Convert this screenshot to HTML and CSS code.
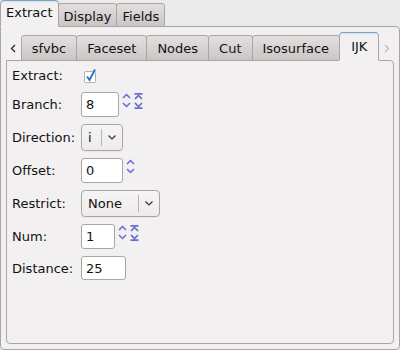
FILE: index.html
```html
<!DOCTYPE html>
<html lang="en">
<head>
  <meta charset="UTF-8" />
  <title>Extract | IJK</title>
  <link rel="stylesheet" href="styles.css">
</head>
<body>

  <div class="window">

    <div class="tabbar outer-tabs">
      <div class="tab active">Extract</div>
      <div class="tab">Display</div>
      <div class="tab">Fields</div>
    </div>

    <div class="panel outer-panel">

      <div class="tabbar inner-tabs">
        <span class="scroll-btn">
          <svg width="6" height="9" viewBox="0 0 6 9"><polyline points="5,1 1.5,4.5 5,8" fill="none" stroke="#222" stroke-width="1.2"/></svg>
        </span>
        <div class="tab">sfvbc</div>
        <div class="tab">Faceset</div>
        <div class="tab">Nodes</div>
        <div class="tab">Cut</div>
        <div class="tab">Isosurface</div>
        <div class="tab active">IJK</div>
        <span class="scroll-btn disabled">
          <svg width="6" height="9" viewBox="0 0 6 9"><polyline points="1,1 4.5,4.5 1,8" fill="none" stroke="#bdb9b9" stroke-width="1.2"/></svg>
        </span>
      </div>

      <div class="panel inner-panel">
        <div class="form">

          <label class="row-extract">Extract:</label>
          <div class="field row-extract">
            <span class="checkbox">
              <svg width="14" height="15" viewBox="0 0 14 15">
                <rect x="1.5" y="3.5" width="11" height="11" rx="1" fill="#fff" stroke="#b3afaf"/>
                <path d="M4 8.5 L6.5 12 L12 1.5" fill="none" stroke="#2f6bd1" stroke-width="1.8"/>
              </svg>
            </span>
          </div>

          <label>Branch:</label>
          <div class="field">
            <input class="entry w-branch" type="text" value="8">
            <svg class="spin" width="9" height="16" viewBox="0 0 9 16"><path d="M1 5 L4.5 1.5 L8 5 M1 10 L4.5 13.5 L8 10"/></svg>
            <svg class="spin double" width="9" height="16" viewBox="0 0 9 16"><path d="M0.5 0.8 H8.5 M1 6 L4.5 2.5 L8 6 M1 10 L4.5 13.5 L8 10 M0.5 15.2 H8.5"/></svg>
          </div>

          <label>Direction:</label>
          <div class="field">
            <div class="combo w-dir">
              <span class="combo-text">i</span>
              <span class="combo-arrow">
                <svg width="8" height="5" viewBox="0 0 8 5"><polyline points="0.5,0.5 4,4 7.5,0.5" fill="none" stroke="#333" stroke-width="1.2"/></svg>
              </span>
            </div>
          </div>

          <label>Offset:</label>
          <div class="field">
            <input class="entry w-offset" type="text" value="0">
            <svg class="spin" width="9" height="16" viewBox="0 0 9 16"><path d="M1 5 L4.5 1.5 L8 5 M1 10 L4.5 13.5 L8 10"/></svg>
          </div>

          <label>Restrict:</label>
          <div class="field">
            <div class="combo w-restrict">
              <span class="combo-text">None</span>
              <span class="combo-arrow">
                <svg width="8" height="5" viewBox="0 0 8 5"><polyline points="0.5,0.5 4,4 7.5,0.5" fill="none" stroke="#333" stroke-width="1.2"/></svg>
              </span>
            </div>
          </div>

          <label>Num:</label>
          <div class="field">
            <input class="entry w-num" type="text" value="1">
            <svg class="spin" width="9" height="16" viewBox="0 0 9 16"><path d="M1 5 L4.5 1.5 L8 5 M1 10 L4.5 13.5 L8 10"/></svg>
            <svg class="spin double" width="9" height="16" viewBox="0 0 9 16"><path d="M0.5 0.8 H8.5 M1 6 L4.5 2.5 L8 6 M1 10 L4.5 13.5 L8 10 M0.5 15.2 H8.5"/></svg>
          </div>

          <label>Distance:</label>
          <div class="field">
            <input class="entry w-dist" type="text" value="25">
          </div>

        </div>
      </div>

    </div>
  </div>

</body>
</html>
```

FILE: styles.css
```css
:root {
  --bg: #ecebeb;
  --panel: #f2f0f0;
  --border: #a9a5a5;
  --tab-top: #e4e0e0;
  --tab-bottom: #cbc5c5;
  --active-edge: #7ba3c4;
  --spin: #6a6ad6;
  --text: #111;
}

* {
  box-sizing: border-box;
  margin: 0;
  padding: 0;
}

body {
  font-family: 'DejaVu Sans', 'Liberation Sans', sans-serif;
  font-size: 13px;
  background-color: var(--bg);
  color: var(--text);
  width: 400px;
  height: 350px;
  overflow: hidden;
}

.window {
  display: flex;
  flex-direction: column;
  height: 350px;
}

/* tab bars */
.tabbar {
  display: flex;
  align-items: flex-end;
  position: relative;
  z-index: 1;
  margin-bottom: -1px;
}

.tab {
  display: flex;
  align-items: center;
  justify-content: center;
  border: 1px solid var(--border);
  background: linear-gradient(var(--tab-top), var(--tab-bottom));
  border-radius: 3px 3px 0 0;
  white-space: nowrap;
}
.tab + .tab {
  margin-left: -1px;
}
.tab.active {
  position: relative;
  z-index: 2;
  background: var(--panel);
  border-color: var(--active-edge) var(--border) var(--panel);
  border-radius: 4px 4px 0 0;
  box-shadow: inset 0 1px 0 #d4e4f0;
}

.outer-tabs {
  height: 27px;
}
.outer-tabs .tab {
  height: 24px;
  padding: 2px 5px 0;
}
.outer-tabs .tab.active {
  height: 27px;
  padding: 0 5px 2px;
}

.inner-tabs {
  height: 29px;
}
.inner-tabs .tab {
  height: 26px;
  padding: 1px 10px 0;
}
.inner-tabs .tab.active {
  height: 29px;
  padding: 0 11px 1px;
}

.scroll-btn {
  display: flex;
  align-items: center;
  justify-content: center;
  width: 16px;
  height: 26px;
}
.scroll-btn.disabled {
  margin-left: auto;
}

/* panels */
.panel {
  background-color: var(--panel);
  border: 1px solid var(--border);
}

.outer-panel {
  flex: 1;
  display: flex;
  flex-direction: column;
  padding: 5px;
  border-radius: 0 4px 4px 4px;
}

.inner-panel {
  flex: 1;
  border-radius: 0 4px 4px 4px;
}

/* form */
.form {
  display: grid;
  grid-template-columns: 69px auto;
  grid-template-rows: 19px 25px 27px 25px 27px 25px 24px;
  row-gap: 7px;
  padding: 5px;
  align-items: center;
}

.form label {
  white-space: nowrap;
}

.field {
  display: flex;
  align-items: center;
  height: 100%;
}

.checkbox {
  display: flex;
  margin-left: 2px;
  margin-top: -1px;
}

.entry {
  height: 100%;
  border: 1px solid var(--border);
  border-radius: 3px;
  background: #fff;
  font: inherit;
  color: var(--text);
  padding: 0 4px;
  outline: none;
}
.w-branch { width: 38px; }
.w-offset { width: 42px; }
.w-num { width: 34px; }
.w-dist { width: 45px; }

.spin {
  align-self: flex-start;
  margin-top: 1px;
  margin-left: 3px;
  fill: none;
  stroke: var(--spin);
  stroke-width: 1.5;
}
.spin.double {
  margin-left: 3px;
  stroke-width: 1.7;
}

.combo {
  display: flex;
  align-items: center;
  height: 100%;
  border: 1px solid var(--border);
  border-radius: 4px;
  background: linear-gradient(#f6f4f4, #eeebeb);
  box-shadow: 0 1px 0 rgba(0, 0, 0, 0.04);
}
.w-dir { width: 42px; }
.w-restrict { width: 79px; }

.combo-text {
  flex: 1;
  padding-left: 6px;
}

.combo-arrow {
  display: flex;
  align-items: center;
  justify-content: center;
  width: 21px;
  height: 17px;
  border-left: 1px solid #b8b4b4;
}
```
